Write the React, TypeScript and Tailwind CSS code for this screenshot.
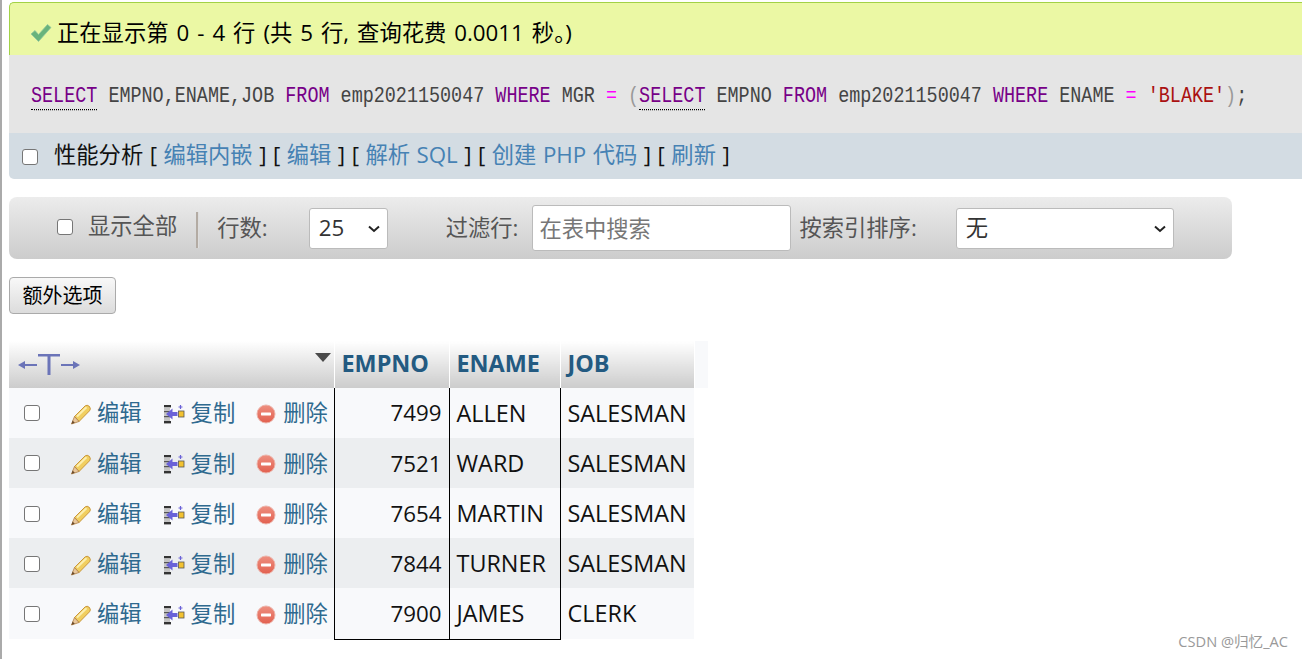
import React from "react";

const FONT = "font-['Open_Sans','Noto_Sans_CJK_SC',sans-serif]";

const rows = [
  { empno: "7499", ename: "ALLEN", job: "SALESMAN" },
  { empno: "7521", ename: "WARD", job: "SALESMAN" },
  { empno: "7654", ename: "MARTIN", job: "SALESMAN" },
  { empno: "7844", ename: "TURNER", job: "SALESMAN" },
  { empno: "7900", ename: "JAMES", job: "CLERK" },
];

const Checkbox = () => (
  <input
    type="checkbox"
    className="appearance-none w-[16px] h-[16px] rounded-[3px] border border-[#767676] bg-white shrink-0"
  />
);

const CheckIcon = () => (
  <svg width="22" height="20" viewBox="0 0 22 20" className="shrink-0 mt-[1px]">
    <path d="M1 11 L5 7.5 L8.5 11.5 L17.5 1.5 L21 4.5 L8.5 18.5 Z" fill="#68b37c" stroke="#8fc79d" strokeWidth="0.8" />
  </svg>
);

const PencilIcon = () => (
  <svg width="22" height="22" viewBox="0 0 22 22" className="shrink-0 mt-[2px]">
    <path d="M4.5 13.5 L15 3 Q17 1.2 19.5 3.5 Q21.2 6 19.5 7.8 L9 18.5 Z" fill="#f1cf60" stroke="#c9963a" strokeWidth="1" />
    <path d="M4.5 13.5 L9 18.5 L1.5 21 Z" fill="#e8c79c" stroke="#b07f40" strokeWidth="0.8" />
    <path d="M1.5 21 L2.6 17.6 L4.8 19.8 Z" fill="#6b4a2a" />
    <path d="M7 13.5 L16.5 4.2" stroke="#fbeeb0" strokeWidth="2" />
  </svg>
);

const CopyIcon = () => (
  <svg width="22" height="22" viewBox="0 0 22 22" className="shrink-0 mt-[2px]">
    <rect x="1" y="2" width="7" height="2.4" fill="#333" />
    <rect x="1" y="18" width="7" height="2.4" fill="#333" />
    <rect x="1" y="4.4" width="6" height="13.6" fill="#c4c4c4" />
    <rect x="1" y="8" width="6" height="1.2" fill="#555" />
    <rect x="1" y="13" width="6" height="1.2" fill="#555" />
    <path d="M3 11 L9.5 5.5 L9.5 9 L14.5 9 L14.5 13 L9.5 13 L9.5 16.5 Z" fill="#6a62d8" />
    <rect x="15.5" y="8" width="5.5" height="6" fill="#f2c230" stroke="#555" strokeWidth="0.8" />
    <path d="M17.5 2 v4 M15.5 4 h4" stroke="#6a62d8" strokeWidth="1.2" />
  </svg>
);

const DeleteIcon = () => (
  <svg width="20" height="20" viewBox="0 0 20 20" className="shrink-0 mt-[2px]">
    <defs>
      <linearGradient id="del" x1="0" y1="0" x2="0" y2="1">
        <stop offset="0" stopColor="#ee8f80" />
        <stop offset="1" stopColor="#e2604f" />
      </linearGradient>
    </defs>
    <circle cx="10" cy="10" r="9" fill="url(#del)" stroke="#ecb3a9" strokeWidth="1" />
    <rect x="5" y="8.6" width="10" height="2.8" rx="0.6" fill="#fff" />
  </svg>
);

const Sep = ({ children }: { children: React.ReactNode }) => (
  <span className="text-[#4682b4]">{children}</span>
);

const Kw = ({ children, under }: { children: React.ReactNode; under?: boolean }) => (
  <span className={under ? "text-[#770088] border-b border-dotted border-black" : "text-[#770088]"}>{children}</span>
);

const Chevron = () => (
  <svg width="12" height="8" viewBox="0 0 12 8" className="absolute right-[8px] top-[17px] pointer-events-none">
    <path d="M1 1.5 L6 6 L11 1.5" fill="none" stroke="#222" strokeWidth="2" />
  </svg>
);

const App = () => {
  return (
    <div className={`${FONT} relative h-[659px] overflow-hidden border-l-2 border-[#aaaaaa] bg-white pl-[7px] pt-[2px] text-[22.3px]`}>
      {/* message */}
      <div className="h-[53px] flex items-center gap-[5px] pl-[20px] pt-[7px] bg-[#ebf8a4] border-t border-l border-[#a2d246] rounded-tl-[5px] text-black">
        <CheckIcon />
        <span className="[word-spacing:2.2px]">正在显示第 0 - 4 行 (共 5 行, 查询花费 0.0011 秒。)</span>
      </div>

      {/* sql */}
      <div className="h-[78px] flex items-center pt-[5px] pl-[22px] bg-[#e5e5e5] font-['Liberation_Mono',monospace] text-[18.43px] text-[#444] whitespace-pre">
        <span className="scale-y-[1.2]">
          <Kw under>SELECT</Kw> EMPNO,ENAME,JOB <Kw>FROM</Kw> emp2021150047 <Kw>WHERE</Kw> MGR{" "}
          <span className="text-[#ff00ff]">=</span> <span className="text-[#999]">(</span>
          <Kw under>SELECT</Kw> EMPNO <Kw>FROM</Kw> emp2021150047 <Kw>WHERE</Kw> ENAME{" "}
          <span className="text-[#ff00ff]">=</span> <span className="text-[#aa1111]">'BLAKE'</span>
          <span className="text-[#999]">)</span>;
        </span>
      </div>

      {/* query actions */}
      <div className="h-[46px] flex items-center pl-[13px] bg-[#d3dce3] rounded-bl-[5px] text-[#111] whitespace-pre">
        <span className="flex mt-[2px]"><Checkbox /></span>
        <span className="ml-[16px] mb-[3px] [word-spacing:0.7px]">
          性能分析 [ <Sep>编辑内嵌</Sep> ] [ <Sep>编辑</Sep> ] [ <Sep>解析 SQL</Sep> ] [ <Sep>创建 PHP 代码</Sep> ] [ <Sep>刷新</Sep> ]
        </span>
      </div>

      {/* navigation bar */}
      <div className="mt-[18px] w-[1223px] h-[62px] flex items-center rounded-[8px] bg-gradient-to-b from-[#ececec] to-[#cccccc] text-[#555]">
        <div className="ml-[48px] mb-[2px] flex items-center gap-[15px]">
          <Checkbox />
          <span className="mb-[3px]">显示全部</span>
        </div>
        <div className="ml-[19px] mt-[3px] w-[3px] h-[36px] bg-[#b3aba3] border-r border-[#ddd]" />
        <span className="ml-[18px]">行数:</span>
        <div className="relative ml-[41px]">
          <select className="block appearance-none w-[79px] h-[41px] pl-[9px] bg-white border border-[#bbb] rounded-[3px] text-[#333]">
            <option>25</option>
          </select>
          <Chevron />
        </div>
        <span className="ml-[58px]">过滤行:</span>
        <input
          placeholder="在表中搜索"
          className="ml-[14px] w-[259px] h-[46px] pl-[6px] bg-white border border-[#bbb] rounded-[3px] placeholder:text-[#777]"
        />
        <span className="ml-[8px]">按索引排序:</span>
        <div className="relative ml-[39px]">
          <select className="block appearance-none w-[218px] h-[41px] pl-[9px] bg-white border border-[#bbb] rounded-[3px] text-[#333]">
            <option>无</option>
          </select>
          <Chevron />
        </div>
      </div>

      <button className="mt-[18px] block w-[107px] h-[37px] rounded-[4px] border border-[#aaa] bg-gradient-to-b from-[#f8f8f8] to-[#dcdcdc] text-[20px] text-black">
        额外选项
      </button>

      {/* results */}
      <table className="mt-[27px] border-collapse table-fixed w-[699px]">
        <colgroup>
          <col className="w-[325px]" />
          <col className="w-[115px]" />
          <col className="w-[111px]" />
          <col className="w-[134px]" />
          <col className="w-[14px]" />
        </colgroup>
        <thead>
          <tr className="h-[46.6px]">
            <th className="relative p-0 bg-gradient-to-b from-white to-[#cccccc] border-r border-white">
              <svg width="62" height="24" viewBox="0 0 62 24" className="absolute left-[9px] top-[10px]">
                <path d="M0 14 L7 10 V13 H19 V15 H7 V18 Z M62 14 L55 10 V13 H43 V15 H55 V18 Z" fill="#6b74b8" />
                <path d="M20 3 H42 V5.5 H32.5 V24 H29.5 V5.5 H20 Z" fill="#6b74b8" />
              </svg>
              <svg width="16" height="9" viewBox="0 0 16 9" className="absolute right-[3px] top-[12px]">
                <path d="M0 0 H16 L8 9 Z" fill="#4a4a4a" />
              </svg>
            </th>
            {["EMPNO", "ENAME", "JOB"].map((h) => (
              <th
                key={h}
                className="p-0 pl-[7px] pb-[2px] text-left text-[23.4px] font-bold text-[#235a81] bg-gradient-to-b from-white to-[#cccccc] border-r border-white"
              >
                {h}
              </th>
            ))}
            <th className="p-0 bg-[#f8f9fb]" />
          </tr>
        </thead>
        <tbody>
          {rows.map((r, i) => (
            <tr key={r.empno} className={`h-[50.2px] ${i % 2 === 0 ? "bg-[#f8f9fb]" : "bg-[#eceef0]"}`}>
              <td className="p-0 pt-[1px] border-r border-black">
                <div className="flex items-center text-[#2f6a8f]">
                  <span className="ml-[15px] flex"><Checkbox /></span>
                  <span className="ml-[30px] flex items-center gap-[5px]"><PencilIcon />编辑</span>
                  <span className="ml-[21px] flex items-center gap-[6px]"><CopyIcon />复制</span>
                  <span className="ml-[21px] flex items-center gap-[7px]"><DeleteIcon />删除</span>
                </div>
              </td>
              <td className="p-0 pt-[1px] pr-[7px] text-right text-[#111] border-r border-black">{r.empno}</td>
              <td className="p-0 pt-[1px] pl-[7px] text-[23.4px] text-[#111] border-r border-black">{r.ename}</td>
              <td className="p-0 pt-[1px] pl-[7px] text-[23.4px] text-[#111]">{r.job}</td>
              <td className="p-0 bg-white" />
            </tr>
          ))}
        </tbody>
      </table>
      <div className="ml-[325px] w-[227px] h-px bg-black" />

      {/* watermark */}
      <span className="absolute right-[14px] bottom-[6px] text-[14.6px] text-[#999]">CSDN @归忆_AC</span>
    </div>
  );
};

export default App;
